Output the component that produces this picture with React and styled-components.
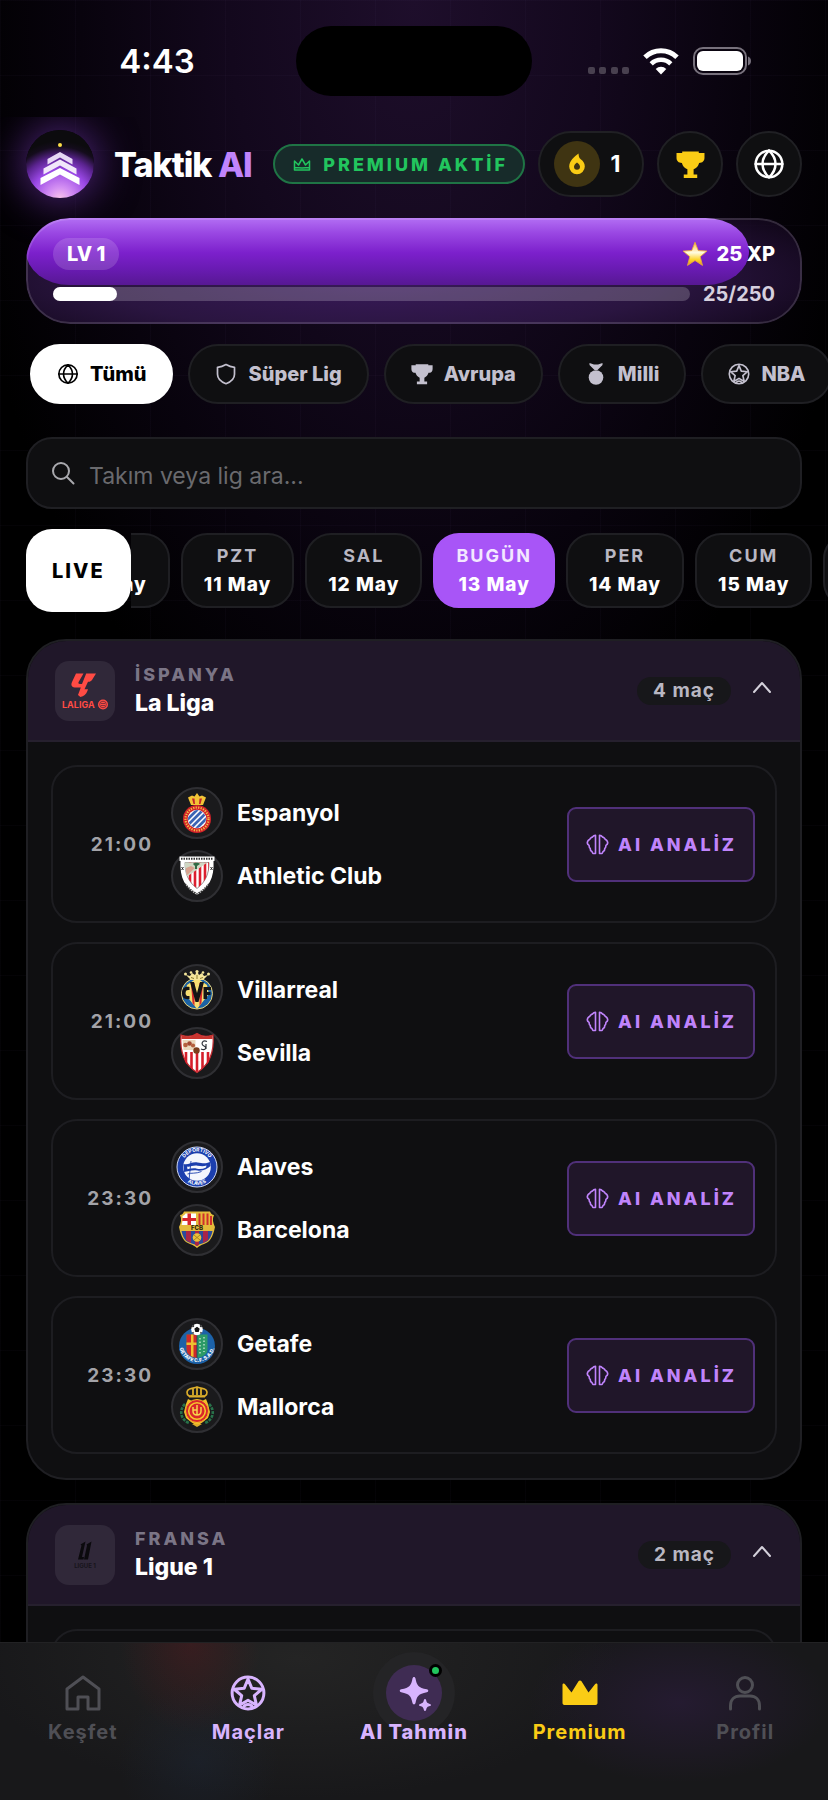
import React, { useLayoutEffect, useRef } from "react";
import styled, { createGlobalStyle } from "styled-components";

const GlobalStyle = createGlobalStyle`
  * {
    box-sizing: border-box;
  }
  body {
    margin: 0;
    background: #000000;
    color: #ffffff;
    font-family: Inter, "Liberation Sans", sans-serif;
  }
  button, input {
    font-family: inherit;
  }
  svg {
    display: block;
    flex: none;
  }
`;

const Screen = styled.div`
  display: flex;
  flex-direction: column;
  height: 100vh;
  overflow: hidden;
  background:
    linear-gradient(rgba(190, 150, 255, 0.025) 1px, transparent 1px) 0 0 / 100% 75px,
    linear-gradient(90deg, rgba(190, 150, 255, 0.025) 1px, transparent 1px) 0 0 / 75px 100%,
    radial-gradient(ellipse 56% 820px at 50% 0, #1e0e2b 0%, #13081d 40%, #08030d 72%, #000000 100%);
`;

/* ---------- status bar ---------- */

const StatusBar = styled.div`
  display: grid;
  grid-template-columns: 1fr 236px 1fr;
  align-items: center;
  height: 117px;
  padding: 5px 0 0;
`;
const Clock = styled.div`
  padding-left: 18px;
  text-align: center;
  font-size: 33px;
  font-weight: 600;
`;
const Island = styled.div`
  height: 70px;
  border-radius: 35px;
  background: #000000;
`;
const StatusIcons = styled.div`
  display: flex;
  align-items: flex-end;
  justify-content: center;
  gap: 14px;
  padding-right: 20px;
`;

/* ---------- header ---------- */

const Content = styled.main`
  flex: 1;
  min-height: 0;
  overflow: hidden auto;
  scrollbar-width: none;
  padding: 13px 26px 0;
`;
const Header = styled.header`
  display: flex;
  align-items: center;
  gap: 13px;
  margin-bottom: 20px;
`;
const Logo = styled.div`
  width: 68px;
  height: 68px;
  border-radius: 50%;
  box-shadow: 0 0 40px 4px rgba(147, 70, 230, 0.5);
`;
const Brand = styled.h1`
  margin: 0 auto 0 7px;
  font-size: 34px;
  font-weight: 800;
  letter-spacing: -1px;
  white-space: nowrap;
  span {
    color: #c084fc;
  }
`;
const PremiumBadge = styled.div`
  display: flex;
  align-items: center;
  gap: 12px;
  height: 40px;
  padding: 0 15px 0 18px;
  border: 2px solid #1f7445;
  border-radius: 20px;
  background: #172b2a;
  color: #22c55e;
  font-size: 18px;
  font-weight: 800;
  letter-spacing: 3px;
  white-space: nowrap;
`;
const RoundButton = styled.button`
  display: flex;
  align-items: center;
  justify-content: center;
  gap: 11px;
  flex: none;
  width: ${(p) => (p.$wide ? "106px" : "66px")};
  height: 66px;
  padding: ${(p) => (p.$wide ? "0 8px 0 0" : "0")};
  border: 2px solid #202024;
  border-radius: 33px;
  background: #0f0f11;
  color: #ffffff;
  font-size: 23px;
  font-weight: 700;
`;
const StreakDisc = styled.span`
  display: flex;
  align-items: center;
  justify-content: center;
  width: 46px;
  height: 46px;
  border-radius: 50%;
  background: #3f3412;
`;

/* ---------- xp card ---------- */

const XpCard = styled.section`
  position: relative;
  overflow: hidden;
  margin-bottom: 20px;
  padding: 20px 27px 18px 27px;
  border-radius: 44px;
  background: radial-gradient(ellipse 62% 90px at 46% 60px, #3a1a5c 0%, #2a1540 60%, rgba(24, 10, 36, 0.7) 100%);
  &::after {
    content: "";
    position: absolute;
    inset: 0;
    border: 2px solid rgba(255, 255, 255, 0.14);
    border-radius: inherit;
    pointer-events: none;
  }
`;
const XpGlow = styled.div`
  position: absolute;
  top: 0;
  left: 0;
  right: 53px;
  height: 67px;
  border-radius: 44px / 34px;
  background: linear-gradient(180deg, #b36ff4 0%, #9a48e3 22%, #7c20cc 52%, #6a1bb4 75%, #571893 100%);
`;
const XpRow = styled.div`
  position: relative;
  display: flex;
  align-items: center;
  justify-content: space-between;
  gap: 13px;
  margin-bottom: ${(p) => (p.$spaced ? "12px" : "0")};
`;
const Level = styled.span`
  padding: 0 14px;
  border-radius: 16px;
  background: rgba(255, 255, 255, 0.15);
  font-size: 20px;
  font-weight: 800;
  line-height: 32px;
`;
const XpAmount = styled.span`
  display: flex;
  align-items: center;
  gap: 9px;
  font-size: 20px;
  font-weight: 800;
`;
const XpTrack = styled.div`
  flex: 1;
  height: 14px;
  border-radius: 7px;
  background: rgba(255, 255, 255, 0.2);
`;
const XpBar = styled.div`
  height: 100%;
  border-radius: 7px;
  background: #ffffff;
`;
const XpTotal = styled.span`
  color: #d6d0de;
  font-size: 20px;
  font-weight: 700;
  line-height: 24px;
`;

/* ---------- filters, search and dates ---------- */

const Filters = styled.nav`
  display: flex;
  gap: 15px;
  margin: 0 -26px 33px 0;
  padding-left: 4px;
  overflow: auto hidden;
  scrollbar-width: none;
`;
const FilterPill = styled.button`
  display: flex;
  align-items: center;
  flex: none;
  gap: 11px;
  height: 60px;
  padding: 0 25px;
  border: 2px solid ${(p) => (p.$active ? "#ffffff" : "#1f1f23")};
  border-radius: 30px;
  background: ${(p) => (p.$active ? "#ffffff" : "#0f0f11")};
  color: ${(p) => (p.$active ? "#000000" : "#c3c0ce")};
  font-size: 20px;
  font-weight: 800;
`;
const SearchBox = styled.label`
  display: flex;
  align-items: center;
  gap: 14px;
  height: 72px;
  margin-bottom: 20px;
  padding: 0 23px;
  border: 2px solid #1f1f23;
  border-radius: 26px;
  background: #0f0f11;
`;
const SearchInput = styled.input`
  flex: 1;
  min-width: 0;
  padding: 5px 0 0;
  border: 0;
  outline: 0;
  background: none;
  color: #ffffff;
  font-size: 23px;
  &::placeholder {
    color: #6a6a6e;
    opacity: 1;
  }
`;
const Days = styled.div`
  display: flex;
  align-items: center;
  margin: 0 -26px 27px 0;
`;
const LiveButton = styled.button`
  flex: none;
  height: 83px;
  padding: 0 26px;
  border: 0;
  border-radius: 26px;
  background: #ffffff;
  color: #000000;
  font-size: 20px;
  font-weight: 800;
  letter-spacing: 2px;
`;
const DayStrip = styled.div`
  display: flex;
  flex: 1;
  min-width: 0;
  gap: 11px;
  overflow: auto hidden;
  scrollbar-width: none;
`;
const DayChip = styled.button`
  display: flex;
  flex: none;
  flex-direction: column;
  align-items: center;
  padding: 6px 21px 7px;
  border: 2px solid ${(p) => (p.$active ? "#a855f7" : "#1f1f23")};
  border-radius: 26px;
  background: ${(p) => (p.$active ? "#a855f7" : "#0f0f11")};
  color: #ffffff;
  font-size: 19px;
  font-weight: 800;
  letter-spacing: 1px;
  line-height: 29px;
  white-space: nowrap;
  small {
    color: ${(p) => (p.$active ? "#f3e8ff" : "#b9b7c2")};
    font-size: 18px;
    font-weight: 700;
    letter-spacing: 2px;
  }
`;

/* ---------- leagues ---------- */

const LeagueCard = styled.section`
  margin-bottom: 23px;
  border: 2px solid #1f1f23;
  border-radius: 40px;
  overflow: hidden;
  background: #0f0f11;
`;
const LeagueHeader = styled.button`
  display: flex;
  align-items: center;
  width: 100%;
  height: 101px;
  padding: 0 27px;
  border: 0;
  border-bottom: 2px solid #26202e;
  background: #201729;
  color: #ffffff;
  text-align: left;
`;
const LeagueIcon = styled.span`
  display: flex;
  align-items: center;
  justify-content: center;
  width: 60px;
  height: 60px;
  margin-right: 20px;
  border-radius: 14px;
  background: #302839;
`;
const LeagueTitle = styled.span`
  display: flex;
  flex: 1;
  flex-direction: column;
  padding-bottom: 4px;
  font-size: 23px;
  font-weight: 800;
  line-height: 28px;
  small {
    color: #7b7586;
    font-size: 18px;
    font-weight: 800;
    letter-spacing: 3px;
  }
`;
const MatchCount = styled.span`
  margin-right: 20px;
  padding: 0 16px;
  border-radius: 14px;
  background: #17171a;
  color: #b9b7c2;
  font-size: 19px;
  font-weight: 700;
  letter-spacing: 1px;
  line-height: 28px;
`;
const MatchList = styled.div`
  display: flex;
  flex-direction: column;
  gap: 19px;
  padding: 23px 23px 24px;
`;
const MatchRow = styled.article`
  display: flex;
  align-items: center;
  min-height: 158px;
  padding-right: 20px;
  border: 2px solid #1d1d21;
  border-radius: 26px;
`;
const Kickoff = styled.time`
  width: 100px;
  margin-right: 18px;
  color: #a3a3a8;
  font-size: 19px;
  font-weight: 700;
  letter-spacing: 2px;
  text-align: right;
`;
const Teams = styled.div`
  display: flex;
  flex: 1;
  flex-direction: column;
  gap: 11px;
`;
const Team = styled.div`
  display: flex;
  align-items: center;
  gap: 14px;
  font-size: 23px;
  font-weight: 700;
`;
const CrestRing = styled.span`
  display: flex;
  align-items: center;
  justify-content: center;
  width: 52px;
  height: 52px;
  border: 2px solid #2f2f33;
  border-radius: 50%;
  background: #1a1a1c;
`;
const AnalysisButton = styled.button`
  display: flex;
  align-items: center;
  gap: 9px;
  height: 75px;
  padding: 0 16px 0 17px;
  border: 2px solid #50307a;
  border-radius: 9px;
  background: #201629;
  color: #c084fc;
  font-size: 18px;
  font-weight: 800;
  letter-spacing: 3px;
  white-space: nowrap;
`;

/* ---------- tab bar ---------- */

const TabBar = styled.nav`
  display: flex;
  flex: none;
  padding: 22px 0 56px;
  border-top: 1px solid #222224;
  background:
    radial-gradient(ellipse 70px 90px at 23% 0, rgba(110, 22, 28, 0.3), transparent),
    radial-gradient(ellipse 80px 80px at 24% 76%, rgba(30, 42, 62, 0.35), transparent),
    radial-gradient(ellipse 150px 80px at 82% 38%, rgba(42, 28, 58, 0.7), transparent),
    radial-gradient(ellipse 320px 140px at 36% 10%, #242424, transparent),
    #18181a;
`;
const Tab = styled.a`
  display: flex;
  flex: 1;
  flex-direction: column;
  align-items: center;
  color: ${(p) => p.$color};
  font-size: 20px;
  font-weight: ${(p) => (p.$bold ? 800 : 700)};
  letter-spacing: 1px;
  line-height: 23px;
  text-decoration: none;
`;
const TabIcon = styled.span`
  position: relative;
  display: flex;
  align-items: center;
  justify-content: center;
  width: 56px;
  height: 56px;
  border-radius: 50%;
  background: ${(p) => (p.$lit ? "#3f2c53" : "none")};
  box-shadow: ${(p) => (p.$lit ? "0 0 0 13px #242426" : "none")};
`;
const OnlineDot = styled.span`
  position: absolute;
  top: -1px;
  right: 0;
  width: 13px;
  height: 13px;
  border: 3px solid #000000;
  border-radius: 50%;
  background: #22c55e;
`;
const TabLabel = styled.span`
  position: relative;
`;

/* ---------- icons ---------- */

const stroke = {
  fill: "none",
  stroke: "currentColor",
  strokeLinecap: "round",
  strokeLinejoin: "round",
};

const SignalIcon = () => (
  <svg width="41" height="8" fill="#48404f">
    <rect width="7" height="7" rx="2" />
    <rect x="11" width="7" height="7" rx="2" />
    <rect x="23" width="7" height="7" rx="2" />
    <rect x="34" width="7" height="7" rx="2" />
  </svg>
);

const WifiIcon = () => (
  <svg width="36" height="27" viewBox="0 0 36 27" fill="none" stroke="#fff">
    <path d="M2 9.3a23 23 0 0 1 32 0" strokeWidth="5" />
    <path d="M8.2 15.8a14 14 0 0 1 19.6 0" strokeWidth="4.6" />
    <path d="M18 26.5l-5.3-5.6a7.6 7.6 0 0 1 10.6 0z" fill="#fff" stroke="none" />
  </svg>
);

const BatteryIcon = () => (
  <svg width="59" height="28" viewBox="0 0 59 28">
    <rect x="1" y="1" width="52" height="26" rx="9" fill="none" stroke="#77717c" strokeWidth="2" />
    <rect x="4" y="4" width="46" height="20" rx="6" fill="#fff" />
    <path d="M55 9.5c4 1.500 4 7.500 0 9z" fill="#77717c" />
  </svg>
);

const LogoIcon = () => (
  <svg width="68" height="68" viewBox="0 0 68 68">
    <defs>
      <radialGradient id="logoGlow" cx="0.5" cy="1.02" r="0.86">
        <stop offset="0" stopColor="#fbc6ea" />
        <stop offset="0.2" stopColor="#d591f3" />
        <stop offset="0.5" stopColor="#9a48e6" />
        <stop offset="0.72" stopColor="#5a238f" />
        <stop offset="0.9" stopColor="#140c1c" />
        <stop offset="1" stopColor="#0c0b0e" />
      </radialGradient>
    </defs>
    <circle cx="34" cy="34" r="34" fill="url(#logoGlow)" />
    <circle cx="34" cy="15" r="2" fill="#fde047" />
    <path d="M34 22l12.500 7v5.500L34 27.500l-12.500 7V29z" fill="#e7d9f5" />
    <path d="M34 29.500l16.500 9v6L34 35.500l-16.500 9v-6z" fill="#f1e8fa" />
    <path d="M34 38l19.500 10v7L34 44.500 14.500 55v-7z" fill="#fff" />
  </svg>
);

const CrownOutline = () => (
  <svg width="18" height="13" viewBox="0 0 18 13" {...stroke} strokeWidth="1.5">
    <path d="M1.500 3v9h15V3l-4 4L9 1 5.500 7zM1.500 12V9.500l7.500.5 7.500-.5" />
  </svg>
);

const FlameIcon = () => (
  <svg width="18" height="22" viewBox="0 0 18 22" fill="#facc15" fillRule="evenodd">
    <path d="M10.500.5C6.500 3.500 1.200 8 1.200 13.500a7.800 7.800 0 0 0 15.600 0c0-3-1.500-5.500-3.800-7C10.800 5 10.800 3 10.500.5zM9 9.500c1.800 1.400 3 2.700 3 4.300a3 3 0 0 1-6 0c0-1.600 1.200-2.900 3-4.300z" />
  </svg>
);

const TrophyIcon = ({ size, color = "currentColor" }) => (
  <svg width={size} height={size} viewBox="0 0 28 28" fill={color}>
    <path d="M6 1.500h16V3h5.500v4.500c0 3.200-2 5-5.200 5-.8 3-2.600 5-5.300 6.200v5h3.500V27h-13v-3.300H11v-5c-2.700-1.200-4.500-3.200-5.300-6.200-3.200 0-5.200-1.800-5.200-5V3H6z" />
  </svg>
);

const GlobeIcon = ({ size, width = 2 }) => (
  <svg width={size} height={size} viewBox="0 0 24 24" {...stroke} strokeWidth={width}>
    <circle cx="12" cy="12" r="10" />
    <path d="M2 12h20M12 2c-6.500 6-6.500 14 0 20M12 2c6.500 6 6.500 14 0 20" />
  </svg>
);

const StarIcon = () => (
  <svg width="26" height="26" viewBox="0 0 24 24">
    <defs>
      <linearGradient id="xpStar" x1="0" y1="0" x2="0" y2="1">
        <stop offset="0" stopColor="#fbbf4a" />
        <stop offset="0.45" stopColor="#fffbe0" />
        <stop offset="0.75" stopColor="#fcd42c" />
        <stop offset="1" stopColor="#e89a18" />
      </linearGradient>
    </defs>
    <path
      d="M12 1.200l3 7.600 8 .5-6.200 5.200 2.100 8L12 18l-6.900 4.500 2.100-8L1 9.300l8-.5z"
      fill="url(#xpStar)"
      stroke="#e9a93a"
      strokeWidth="0.8"
      strokeLinejoin="round"
    />
  </svg>
);

const ShieldIcon = () => (
  <svg width="22" height="22" viewBox="0 0 22 22" {...stroke} strokeWidth="1.7">
    <path d="M11 1.500C8.500 3 5.500 4 2.500 4.300v7c0 4.200 3 7.400 8.500 9.400 5.500-2 8.500-5.200 8.500-9.400v-7C16.500 4 13.500 3 11 1.500z" />
  </svg>
);

const MedalIcon = () => (
  <svg width="22" height="22" viewBox="0 0 22 22" fill="currentColor">
    <path d="M4.500 0L9 1.500h4L17.500 0v2L12.500 7h-3L4.500 2z" />
    <circle cx="11" cy="14.500" r="7.300" />
  </svg>
);

const BallIcon = ({ size, width }) => (
  <svg width={size} height={size} viewBox="0 0 24 24" {...stroke} strokeWidth={width}>
    <circle cx="12" cy="12" r="10.600" />
    <path d="M12 2.800l2.500 6 6.700.7-5 4.300 1.500 6.400-5.700-3.400-5.700 3.400 1.500-6.400-5-4.300 6.700-.7z" />
    <path d="M9 21.500c1-2.400 5-2.400 6 0" />
  </svg>
);

const SearchIcon = () => (
  <svg width="24" height="24" viewBox="0 0 24 24" {...stroke} stroke="#a9a9ae" strokeWidth="2">
    <circle cx="10" cy="10" r="8" />
    <path d="M16 16l6.500 6.500" />
  </svg>
);

const ChevronUp = () => (
  <svg width="22" height="22" viewBox="0 0 22 22" {...stroke} stroke="#d3d0da" strokeWidth="2">
    <path d="M3 12l8-9 8 9" />
  </svg>
);

const BrainIcon = () => (
  <svg width="23" height="21" viewBox="0 0 23 21" {...stroke} strokeWidth="1.600">
    <path d="M9.500 1.200v18.300H7.200c-.9-.4-.7-1.700-1.700-2.200-1-.5-1.300-1.600-1.200-2.900-1.300-.6-1.200-2-1.200-3C1.600 10.500.9 9 1.700 7.500c.2-1.200 1.200-1.500 2-2.100C4.200 4 5.400 3.600 6.400 3c.8-1 1.900-1.700 3.100-1.800z" />
    <path d="M13.500 1.200v18.300h2.300c.9-.4.7-1.700 1.700-2.200 1-.5 1.300-1.600 1.200-2.900 1.300-.6 1.200-2 1.200-3 1.500-.9 2.200-2.400 1.400-3.900-.2-1.200-1.200-1.500-2-2.100-.5-1.400-1.700-1.800-2.700-2.400-.8-1-1.900-1.700-3.100-1.800z" />
  </svg>
);

const HomeIcon = () => (
  <svg width="36" height="36" viewBox="0 0 36 36" {...stroke} strokeWidth="3">
    <path d="M2 14L18 2l16 12v20H23V22H13v12H2z" />
  </svg>
);

const SparkleIcon = () => (
  <svg width="36" height="36" viewBox="0 0 36 36" fill="currentColor">
    <path d="M18 2c.8 0 1.300.6 1.500 1.500 1.400 7 2.800 9.200 11.300 10.800 2 .4 2 2.600 0 3-8.500 1.600-9.900 3.800-11.300 10.800-.4 1.800-2.600 1.800-3 0-1.400-7-2.800-9.200-11.300-10.800-2-.4-2-2.600 0-3 8.500-1.600 9.900-3.800 11.300-10.800.2-.9.700-1.500 1.500-1.500z" />
    <path d="M29 24c.6 0 .9.400 1.100 1 .7 2.700 1.200 3.200 3.900 3.900 1.300.4 1.300 1.900 0 2.200-2.700.7-3.200 1.200-3.900 3.900-.4 1.300-1.900 1.300-2.200 0-.7-2.700-1.200-3.200-3.900-3.900-1.300-.3-1.300-1.800 0-2.200 2.700-.7 3.200-1.200 3.900-3.900.2-.6.500-1 1.100-1z" />
  </svg>
);

const CrownIcon = () => (
  <svg width="36" height="26" viewBox="0 0 36 26" fill="currentColor">
    <path d="M.5 4.800c0-1.400 1.800-1.600 2.500-.6l6.500 8.300 7-11.200c.7-1 2.300-1 3 0l7 11.200L33 4.200c.7-1 2.500-.8 2.500.6V23c0 1.200-.8 2-2 2h-31c-1.200 0-2-.8-2-2z" />
  </svg>
);

const PersonIcon = () => (
  <svg width="36" height="36" viewBox="0 0 36 36" {...stroke} strokeWidth="3">
    <circle cx="18" cy="10" r="7.500" />
    <path d="M3.500 34v-3.500c0-6 4-9.500 9.500-9.500h10c5.500 0 9.500 3.500 9.500 9.500V34" />
  </svg>
);

/* ---------- league logos ---------- */

const LaLigaLogo = () => (
  <svg width="48" height="38" viewBox="0 0 48 38" fill="#ff4b44">
    <path d="M15 1.500h7.500L17.600 10c-.6 1.200 0 2 1.300 2H21l4.200-10.500H35L31 8c-1.200 1.500-2 1.800-4 1.700l-3.500 7.500H27l-.6 1.800c-1.200 3.500-3.600 5.300-7 6l-2.400-2 2.800-7.500h-4.500c-4.500 0-5.800-2-4.300-5.500z" />
    <text x="1" y="36" fontSize="9" fontWeight="700">LALIGA</text>
    <circle cx="42" cy="32.500" r="5" />
    <circle cx="42" cy="32.500" r="3.300" fill="none" stroke="#6a2b36" strokeWidth="0.8" />
    <path d="M40 31.500h4M40 33.500h4" stroke="#6a2b36" strokeWidth="0.8" />
  </svg>
);

const LigueOneLogo = () => (
  <svg width="24" height="28" viewBox="0 0 24 28" fill="#0b0a0d">
    <path d="M7.500 3.500l5-3L9 16h2l-.5 2.500H5L8.500 4.500z" />
    <path d="M13.500 3.500l5-3L15 18.500h-4L14 4.500z" />
    <text x="12" y="27" fontSize="6" fontWeight="700" textAnchor="middle" fill="#17141b">LIGUE 1</text>
  </svg>
);

/* ---------- club crests ---------- */

const EspanyolCrest = () => (
  <svg width="42" height="42" viewBox="0 0 42 42">
    <path d="M12 5.500l3 7.500h12l3-7.500-4-2-2.500 1L21 1l-2.500 3.500-2.500-1z" fill="#f3c436" />
    <path d="M16 6.500l1.500 5.500h1.500L18.500 6.500zM23.500 6.500L23 12h1.500L26 6.500z" fill="#c4242b" />
    <circle cx="21" cy="27" r="14" fill="#d3222a" />
    <circle cx="21" cy="27" r="11.500" fill="none" stroke="#f2c744" strokeWidth="2.200" strokeDasharray="1.200 1.300" />
    <circle cx="21" cy="27" r="9.300" fill="#fff" />
    <clipPath id="espanyolDisc">
      <circle cx="21" cy="27" r="9" />
    </clipPath>
    <path
      d="M8 31L25 14M10 35L29 16M13 38L32 19M17 40L34 23"
      stroke="#3a63b4"
      strokeWidth="2.700"
      clipPath="url(#espanyolDisc)"
    />
  </svg>
);

const AthleticCrest = () => (
  <svg width="42" height="42" viewBox="0 0 42 42">
    <path d="M3.500 1.500h35V6h-1c1 17-5 27-16.500 34C9.500 33 3.500 23 4.500 6h-1z" fill="#fff" />
    <path d="M5 3.800h32" stroke="#333" strokeWidth="2" strokeDasharray="1.500 1" />
    <path d="M9 7.500h24c0 11-3 19-12 26C12 26.500 9 18.500 9 7.500z" fill="#fff" stroke="#333" strokeWidth="0.500" />
    <clipPath id="athleticShield">
      <path d="M9 7.500h24c0 11-3 19-12 26C12 26.500 9 18.500 9 7.500z" />
    </clipPath>
    <g clipPath="url(#athleticShield)">
      <path d="M14 0v42M19 0v42M24 0v42M29 0v42M33.500 0v42" stroke="#dc1f2e" strokeWidth="2.600" />
      <path d="M9 7h23L9 23z" fill="#cfd7c3" />
      <path d="M10 13l5-2 4 2-9 8z" fill="#d8a28f" />
      <path d="M17 9c2-2 5-2 7 0l-3 2v3h-2v-3z" fill="#2f6b45" />
    </g>
    <path d="M9 29c3 4 7 7.500 12 10M33 29c-3 4-7 7.500-12 10" stroke="#333" strokeWidth="2" strokeDasharray="1.500 1" fill="none" />
    <path d="M5.500 12l2 3m0-3l-2 3M34.500 12l2 3m0-3l-2 3" stroke="#222" strokeWidth="0.900" />
  </svg>
);

const VillarrealCrest = () => (
  <svg width="42" height="42" viewBox="0 0 42 42">
    <circle cx="21" cy="24.500" r="15.500" fill="#1c63a5" stroke="#e6d27b" strokeWidth="1" />
    <path d="M21 9l10 7 2 9-12 15L9 25l2-9z" fill="#f7df72" />
    <path d="M15 14l1.500 20 2 3V14zM23.500 14v23l2-3L27 14z" fill="#d92b2b" />
    <path d="M13.500 18c-5.500-.8-7.500 2-7.500 6s2 6.800 7.500 6v-3c-3 .4-4-.6-4-3s1-3.400 4-3z" fill="#151515" />
    <path d="M14 13h4l3 11 3-11h4l-5.500 20h-3z" fill="#151515" />
    <path d="M27.500 18h7.500v3h-4v2h3.500v3H31v4h-3.500z" fill="#151515" />
    <path d="M10 6l5 5h12l5-5-4 1-2-3-3 2-2-4-2 4-3-2-2 3z" fill="#f4e59a" />
    <path d="M15 8.500l3 1M27 8.500l-3 1M21 6v4" stroke="#8a7a2c" strokeWidth="1" />
    <circle cx="21" cy="2.500" r="1.600" fill="#f4e59a" />
    <circle cx="9.500" cy="5" r="1.500" fill="#f4e59a" />
    <circle cx="32.500" cy="5" r="1.500" fill="#f4e59a" />
    <circle cx="15" cy="3.500" r="1.300" fill="#f4e59a" />
    <circle cx="27" cy="3.500" r="1.300" fill="#f4e59a" />
  </svg>
);

const SevillaCrest = () => (
  <svg width="42" height="42" viewBox="0 0 42 42">
    <path d="M5 3c6 2 11 2 16-1.500C26 5 31 5 37 3c1.500 18-4 30-16 37.500C9 33 3.500 21 5 3z" fill="#fff" stroke="#c62a2f" strokeWidth="1.200" />
    <path d="M5.500 3c6 2 10.500 2 15.500-1.500C26 5 30.500 5 36.500 3v4H5.500z" fill="#c8352f" />
    <clipPath id="sevillaStripes">
      <path d="M5 20h32c-2 9-7 15.500-16 20C12 35.500 7 29 5 20z" />
    </clipPath>
    <path d="M10 18v24M15.500 18v24M21 18v24M26.500 18v24M32 18v24" stroke="#d51f2b" strokeWidth="2.600" clipPath="url(#sevillaStripes)" />
    <path d="M6.500 8h13v10h-12z" fill="#ead9bd" />
    <circle cx="9.500" cy="13" r="2.300" fill="#b5613f" />
    <circle cx="13.500" cy="11.500" r="2.300" fill="#a34a33" />
    <circle cx="17" cy="13.500" r="2.100" fill="#b5613f" />
    <path d="M31 9.500c-5-2-6.500 3-3 4.500s1 5-3 3M30 17v-5" stroke="#30343c" strokeWidth="1.200" fill="none" />
    <circle cx="20.500" cy="18.500" r="3.200" fill="#7c3f1e" />
  </svg>
);

const AlavesCrest = () => (
  <svg width="42" height="42" viewBox="0 0 42 42">
    <circle cx="21" cy="21" r="20" fill="#1c3fae" stroke="#cfd8f4" strokeWidth="1" />
    <circle cx="21" cy="21" r="13.800" fill="#f4f6fd" />
    <path d="M7.500 18c5 1.500 8-2.500 14-1.500 5 .8 8 1.500 12.500-.5l.5 4c-3 3-8 5.500-13 4.500-6-1-9 1-13.500 1.500z" fill="#1c3fae" />
    <path d="M11 20.500c3 .8 6-1.500 10.500-.8 3.500.5 6 .8 9-.2l-.5 2c-3 1.500-6 2-9 1.200-3.500-.8-6.500 0-9.500.6z" fill="#f4f6fd" />
    <path d="M15 15l-2 19M11.500 28c4-1.500 8 0 14-2.500" stroke="#1c3fae" strokeWidth="0.900" fill="none" />
    <path id="alavesTop" d="M5.500 21a15.500 15.500 0 0 1 31 0" fill="none" />
    <path id="alavesBottom" d="M3 21a18 18 0 0 0 36 0" fill="none" />
    <text fill="#fff" fontSize="5" fontWeight="700" textAnchor="middle">
      <textPath href="#alavesTop" startOffset="50%">DEPORTIVO</textPath>
    </text>
    <text fill="#fff" fontSize="5" fontWeight="700" textAnchor="middle">
      <textPath href="#alavesBottom" startOffset="50%">ALAVÉS</textPath>
    </text>
  </svg>
);

const BarcelonaCrest = () => (
  <svg width="42" height="42" viewBox="0 0 42 42">
    <path d="M4 6c2 0 3-1.500 4-3.500h26C35 4.500 36 6 38 6c-2 4-1 8 1 12-2 10-5 15-11 17-3 1-5 2-7 4-2-2-4-3-7-4C8 33 5 28 3 18c2-4 3-8 1-12z" fill="#e5bc3b" />
    <path d="M6.500 7C8 6.500 9 5.500 9.500 4.500H20V16H5.500c1-3 1.500-6 1-9z" fill="#fff" />
    <path d="M11.500 4.500h3.500V16h-3.500zM6.500 9H20v3H6.300z" fill="#d8262e" />
    <path d="M23.500 4.500V16M27.500 4.500V16M31.500 4.500V16M35 7v9" stroke="#d0302c" strokeWidth="2" />
    <path d="M5.500 22h31c-1.500 7-4 10.500-9 12-3 1-5 1.500-6.500 3-1.500-1.500-3.500-2-6.500-3-5-1.500-7.500-5-9-12z" fill="#2b4a9b" />
    <path d="M10 22h5v12l-5-3zM27 22h5v9l-5 3zM19 22h4v14l-2 1-2-1z" fill="#a92548" />
    <text x="21" y="21" fontSize="6" fontWeight="800" textAnchor="middle" fill="#2b2410">FCB</text>
    <circle cx="21" cy="28.500" r="4.300" fill="#e9c23a" />
    <path d="M18 26l6 5M18 31l6-5" stroke="#a67f1d" strokeWidth="0.900" />
  </svg>
);

const GetafeCrest = () => (
  <svg width="42" height="42" viewBox="0 0 42 42">
    <circle cx="21" cy="23" r="18" fill="#1c62a8" />
    <path d="M10.500 11.500h21V26c0 5-4 8-10.500 9-6.500-1-10.500-4-10.500-9z" fill="#2c9a67" />
    <path d="M10.500 11.500H21V35c-6.500-1-10.500-4-10.500-9z" fill="#cf2a2a" />
    <path d="M15 11.500h2.500V34L15 33zM10.500 19.500H21V22H10.500z" fill="#efc02f" />
    <path d="M24 15v16M28 14v15" stroke="#bfe6cf" strokeWidth="1.400" strokeDasharray="1.500 2" />
    <path d="M21 11.500V35" stroke="#163e70" strokeWidth="0.800" />
    <circle cx="21" cy="6.500" r="5.800" fill="#fff" />
    <path d="M21 4.500l2 1.500-.8 2.500h-2.400L19 6zM16.500 4l1.500-1.500M25.500 4L24 2.500M17.500 10.500l-.8-1.500M24.500 10.500l.8-1.500" fill="#151515" stroke="#151515" strokeWidth="1.200" />
    <path id="getafeRing" d="M3 21a18 18 0 0 0 36 0" fill="none" />
    <text fill="#fff" fontSize="5" fontWeight="800" textAnchor="middle">
      <textPath href="#getafeRing" startOffset="50%">GETAFE C.F. S.A.D.</textPath>
    </text>
  </svg>
);

const MallorcaCrest = () => (
  <svg width="42" height="42" viewBox="0 0 42 42">
    <path d="M9 18c-6 6-5 15 4 19M33 18c6 6 5 15-4 19" stroke="#28724a" strokeWidth="2.600" strokeDasharray="3 1" fill="none" />
    <path d="M13 10c-3-2-2.500-6 .5-7C17 2 19 2 21 1c2 1 4 1 7.500 2 3 1 3.500 5 .5 7z" fill="none" stroke="#dcae2b" strokeWidth="1.700" />
    <path d="M17 3v6M21 2v7M25 3v6M13 10.500h16" stroke="#dcae2b" strokeWidth="1.800" />
    <path d="M12 13l4 2h10l4-2 2 5 2 8-2 6-5 4-6 4-6-4-5-4-2-6 2-8z" fill="#f2bf28" />
    <circle cx="21" cy="25" r="11.500" fill="#d9262b" stroke="#f2bf28" strokeWidth="1" />
    <circle cx="21" cy="25" r="8.300" fill="none" stroke="#f5c52c" strokeWidth="1.600" />
    <path d="M17 21v4c0 2.500 1.500 4 4 4s4-1.500 4-4v-4M21 19v10M17.500 24H21" stroke="#f8d44c" strokeWidth="1.500" fill="none" />
    <path d="M16 38l5 3 5-3z" fill="#dcae2b" />
  </svg>
);

/* ---------- data ---------- */

const filters = [
  { label: "Tümü", icon: <GlobeIcon size={22} width={1.8} />, active: true },
  { label: "Süper Lig", icon: <ShieldIcon /> },
  { label: "Avrupa", icon: <TrophyIcon size={22} /> },
  { label: "Milli", icon: <MedalIcon /> },
  { label: "NBA", icon: <BallIcon size={22} width={1.8} /> },
];

const days = [
  { day: "PAZ", date: "10 May" },
  { day: "PZT", date: "11 May" },
  { day: "SAL", date: "12 May" },
  { day: "BUGÜN", date: "13 May", active: true },
  { day: "PER", date: "14 May" },
  { day: "CUM", date: "15 May" },
  { day: "CMT", date: "16 May" },
];

const laLiga = [
  { time: "21:00", home: ["Espanyol", EspanyolCrest], away: ["Athletic Club", AthleticCrest] },
  { time: "21:00", home: ["Villarreal", VillarrealCrest], away: ["Sevilla", SevillaCrest] },
  { time: "23:30", home: ["Alaves", AlavesCrest], away: ["Barcelona", BarcelonaCrest] },
  { time: "23:30", home: ["Getafe", GetafeCrest], away: ["Mallorca", MallorcaCrest] },
];

const xp = { current: 25, max: 250 };

/* ---------- components ---------- */

const TeamLine = ({ team: [name, Crest] }) => (
  <Team>
    <CrestRing>
      <Crest />
    </CrestRing>
    {name}
  </Team>
);

const Match = ({ time, home, away }) => (
  <MatchRow>
    <Kickoff>{time}</Kickoff>
    <Teams>
      <TeamLine team={home} />
      <TeamLine team={away} />
    </Teams>
    <AnalysisButton>
      <BrainIcon />
      AI ANALİZ
    </AnalysisButton>
  </MatchRow>
);

const League = ({ country, name, count, logo, children }) => (
  <LeagueCard>
    <LeagueHeader aria-expanded="true">
      <LeagueIcon>{logo}</LeagueIcon>
      <LeagueTitle>
        <small>{country}</small>
        {name}
      </LeagueTitle>
      <MatchCount>{count} maç</MatchCount>
      <ChevronUp />
    </LeagueHeader>
    <MatchList>{children}</MatchList>
  </LeagueCard>
);

const DayPicker = () => {
  const strip = useRef(null);

  // leave only the edge of the previous day showing
  useLayoutEffect(() => {
    const first = strip.current.firstElementChild;
    strip.current.scrollLeft = first.offsetWidth - 39;
  }, []);

  return (
    <Days>
      <LiveButton>LIVE</LiveButton>
      <DayStrip ref={strip}>
        {days.map(({ day, date, active }) => (
          <DayChip key={date} $active={active}>
            <small>{day}</small>
            {date}
          </DayChip>
        ))}
      </DayStrip>
    </Days>
  );
};

const App = () => (
  <>
    <GlobalStyle />
    <Screen>
      <StatusBar>
        <Clock>4:43</Clock>
        <Island />
        <StatusIcons>
          <SignalIcon />
          <WifiIcon />
          <BatteryIcon />
        </StatusIcons>
      </StatusBar>

      <Content>
        <Header>
          <Logo>
            <LogoIcon />
          </Logo>
          <Brand>
            Taktik <span>AI</span>
          </Brand>
          <PremiumBadge>
            <CrownOutline />
            PREMIUM AKTİF
          </PremiumBadge>
          <RoundButton $wide>
            <StreakDisc>
              <FlameIcon />
            </StreakDisc>
            1
          </RoundButton>
          <RoundButton aria-label="Kupalar">
            <TrophyIcon size={29} color="#facc15" />
          </RoundButton>
          <RoundButton aria-label="Dil">
            <GlobeIcon size={32} width={1.9} />
          </RoundButton>
        </Header>

        <XpCard>
          <XpGlow />
          <XpRow $spaced>
            <Level>LV 1</Level>
            <XpAmount>
              <StarIcon />
              {xp.current} XP
            </XpAmount>
          </XpRow>
          <XpRow>
            <XpTrack>
              <XpBar style={{ width: `${(xp.current / xp.max) * 100}%` }} />
            </XpTrack>
            <XpTotal>
              {xp.current}/{xp.max}
            </XpTotal>
          </XpRow>
        </XpCard>

        <Filters>
          {filters.map(({ label, icon, active }) => (
            <FilterPill key={label} $active={active}>
              {icon}
              {label}
            </FilterPill>
          ))}
        </Filters>

        <SearchBox>
          <SearchIcon />
          <SearchInput type="text" aria-label="Takım veya lig ara" placeholder="Takım veya lig ara..." />
        </SearchBox>

        <DayPicker />

        <League country="İSPANYA" name="La Liga" count={4} logo={<LaLigaLogo />}>
          {laLiga.map((match) => (
            <Match key={match.home[0]} {...match} />
          ))}
        </League>
        <League country="FRANSA" name="Ligue 1" count={2} logo={<LigueOneLogo />}>
          <MatchRow />
          <MatchRow />
        </League>
      </Content>

      <TabBar>
        <Tab href="#kesfet" $color="#4f4f55">
          <TabIcon>
            <HomeIcon />
          </TabIcon>
          <TabLabel>Keşfet</TabLabel>
        </Tab>
        <Tab href="#maclar" $color="#d8b4fe">
          <TabIcon>
            <BallIcon size={36} width={2} />
          </TabIcon>
          <TabLabel>Maçlar</TabLabel>
        </Tab>
        <Tab href="#tahmin" $color="#d8b4fe" $bold>
          <TabIcon $lit>
            <SparkleIcon />
            <OnlineDot />
          </TabIcon>
          <TabLabel>AI Tahmin</TabLabel>
        </Tab>
        <Tab href="#premium" $color="#facc15">
          <TabIcon>
            <CrownIcon />
          </TabIcon>
          <TabLabel>Premium</TabLabel>
        </Tab>
        <Tab href="#profil" $color="#4f4f55">
          <TabIcon>
            <PersonIcon />
          </TabIcon>
          <TabLabel>Profil</TabLabel>
        </Tab>
      </TabBar>
    </Screen>
  </>
);

export default App;
